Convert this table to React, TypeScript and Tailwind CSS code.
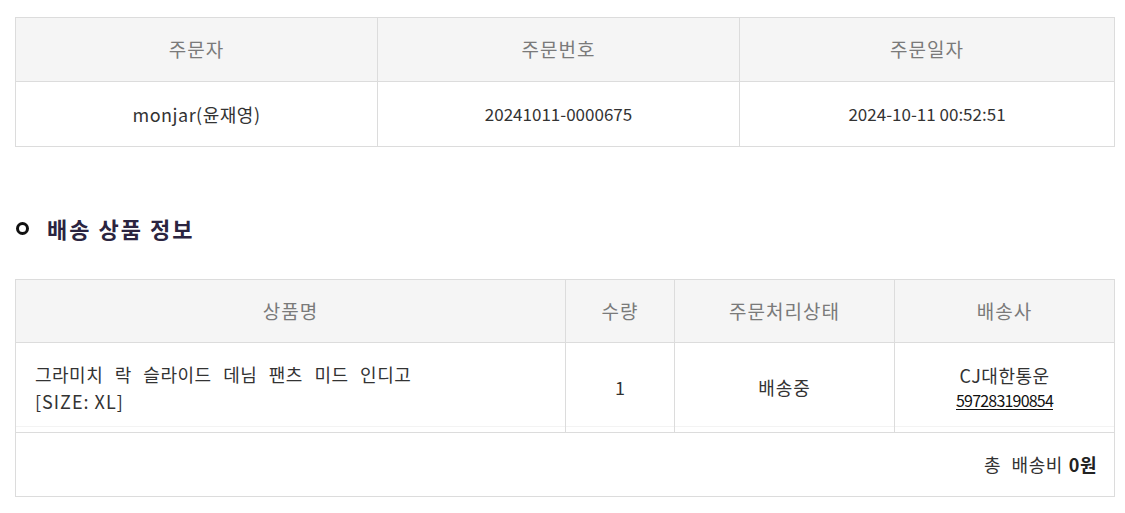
import React from 'react';

const font = { fontFamily: '"Noto Sans CJK KR", "Noto Sans", sans-serif' };

export default function App() {
  return (
    <div className="w-[1125px] h-[513px] bg-white pt-[17px] pl-[15px] text-[#333]" style={font}>
      {/* 주문 정보 */}
      <div className="w-[1100px] border border-[#dcdcdc]">
        <div className="grid grid-cols-[362px_362px_1fr] h-[64px] bg-[#f5f5f5] border-b border-[#dcdcdc] text-[#7a7a7a] text-[19px] tracking-[1px]">
          <div className="flex items-center justify-center border-r border-[#dcdcdc]">주문자</div>
          <div className="flex items-center justify-center border-r border-[#dcdcdc]">주문번호</div>
          <div className="flex items-center justify-center">주문일자</div>
        </div>
        <div className="grid grid-cols-[362px_362px_1fr] h-[64px] text-[17px] text-[#333]">
          <div className="flex items-center justify-center border-r border-[#dcdcdc] text-[18px] tracking-[0.5px]">monjar(윤재영)</div>
          <div className="flex items-center justify-center border-r border-[#dcdcdc]">20241011-0000675</div>
          <div className="flex items-center justify-center">2024-10-11 00:52:51</div>
        </div>
      </div>

      {/* 배송 상품 정보 */}
      <div className="flex items-center h-[132px] pt-[31px]">
        <span className="w-[13px] h-[13px] rounded-full border-[3.5px] border-[#111] mr-[18px] ml-[1px]" />
        <h3 className="text-[22px] font-bold text-[#2b2440] tracking-[2px]">배송 상품 정보</h3>
      </div>

      <div className="w-[1100px] border border-[#dcdcdc]">
        <div className="grid grid-cols-[550px_109px_220px_1fr] h-[63px] bg-[#f5f5f5] border-b border-[#dcdcdc] text-[#7a7a7a] text-[19px] tracking-[1px]">
          <div className="flex items-center justify-center border-r border-[#dcdcdc]">상품명</div>
          <div className="flex items-center justify-center border-r border-[#dcdcdc]">수량</div>
          <div className="flex items-center justify-center border-r border-[#dcdcdc]">주문처리상태</div>
          <div className="flex items-center justify-center">배송사</div>
        </div>
        <div className="grid grid-cols-[550px_109px_220px_1fr] h-[90px] border-b border-[#dcdcdc] text-[18px]">
          <div className="border-r border-[#dcdcdc] pb-[5px]">
            <div className="h-full border-b border-[#f3f3f3] flex flex-col justify-center pl-[19px] leading-[27px] pt-[6px]">
              <span className="tracking-[0.5px] [word-spacing:7px]">그라미치 락 슬라이드 데님 팬츠 미드 인디고</span>
              <span className="tracking-[1px]">[SIZE: XL]</span>
            </div>
          </div>
          <div className="border-r border-[#dcdcdc] pb-[5px]">
            <div className="h-full border-b border-[#f3f3f3] flex items-center justify-center pt-[6px]">1</div>
          </div>
          <div className="border-r border-[#dcdcdc] pb-[5px]">
            <div className="h-full border-b border-[#f3f3f3] flex items-center justify-center pt-[6px] tracking-[1px]">배송중</div>
          </div>
          <div className="pb-[5px]">
            <div className="h-full border-b border-[#f3f3f3] flex flex-col items-center justify-center leading-[25px] pt-[6px]">
              <span className="tracking-[0.5px]">CJ대한통운</span>
              <a className="underline text-[#111] underline-offset-2 text-[16px] tracking-[-0.8px]">597283190854</a>
            </div>
          </div>
        </div>
        <div className="flex items-center justify-end h-[63px] pr-[17px] text-[18px] tracking-[0.5px] [word-spacing:6px]">
          총 배송비 <b className="ml-[6px] text-[#222]">0원</b>
        </div>
      </div>
    </div>
  );
}
